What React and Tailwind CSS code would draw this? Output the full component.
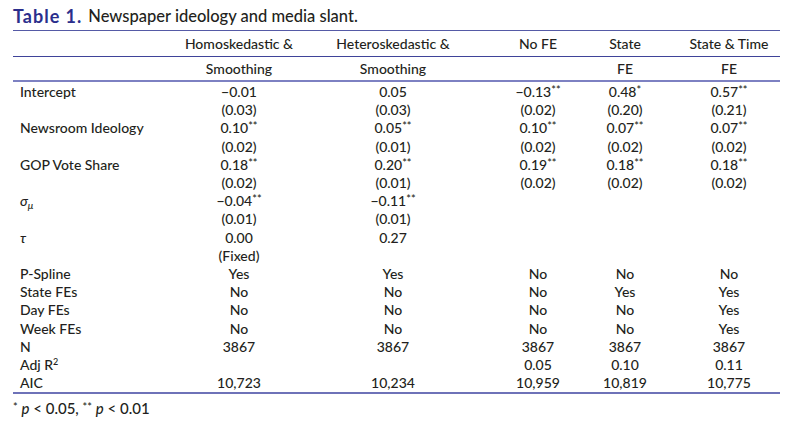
import React from "react";

const Star = ({ s }) => (
  <span className="relative -top-[3px] text-[11px] leading-none">{s}</span>
);

const V = ({ v, s }) => (
  <span className="whitespace-nowrap">
    {v}
    {s ? <Star s={s} /> : null}
  </span>
);

const rows = [
  { label: "Intercept", cells: [["−0.01"], ["0.05"], ["−0.13", "**"], ["0.48", "*"], ["0.57", "**"]] },
  { label: "", cells: [["(0.03)"], ["(0.03)"], ["(0.02)"], ["(0.20)"], ["(0.21)"]] },
  { label: "Newsroom Ideology", cells: [["0.10", "**"], ["0.05", "**"], ["0.10", "**"], ["0.07", "**"], ["0.07", "**"]] },
  { label: "", cells: [["(0.02)"], ["(0.01)"], ["(0.02)"], ["(0.02)"], ["(0.02)"]] },
  { label: "GOP Vote Share", cells: [["0.18", "**"], ["0.20", "**"], ["0.19", "**"], ["0.18", "**"], ["0.18", "**"]] },
  { label: "", cells: [["(0.02)"], ["(0.01)"], ["(0.02)"], ["(0.02)"], ["(0.02)"]] },
  {
    label: (
      <span className="italic">
        σ<span className="relative top-[3px] text-[10px]">μ</span>
      </span>
    ),
    cells: [["−0.04", "**"], ["−0.11", "**"], [""], [""], [""]],
  },
  { label: "", cells: [["(0.01)"], ["(0.01)"], [""], [""], [""]] },
  { label: <span className="italic">τ</span>, cells: [["0.00"], ["0.27"], [""], [""], [""]] },
  { label: "", cells: [["(Fixed)"], [""], [""], [""], [""]] },
  { label: "P-Spline", cells: [["Yes"], ["Yes"], ["No"], ["No"], ["No"]] },
  { label: "State FEs", cells: [["No"], ["No"], ["No"], ["Yes"], ["Yes"]] },
  { label: "Day FEs", cells: [["No"], ["No"], ["No"], ["No"], ["Yes"]] },
  { label: "Week FEs", cells: [["No"], ["No"], ["No"], ["No"], ["Yes"]] },
  { label: "N", cells: [["3867"], ["3867"], ["3867"], ["3867"], ["3867"]] },
  {
    label: (
      <span>
        Adj R<span className="relative -top-[5px] text-[9px]">2</span>
      </span>
    ),
    cells: [[""], [""], ["0.05"], ["0.10"], ["0.11"]],
  },
  { label: "AIC", cells: [["10,723"], ["10,234"], ["10,959"], ["10,819"], ["10,775"]] },
];

const GRID = "grid grid-cols-[149px_154px_154px_136px_38px_34px_102px]";

const Cell = ({ children }) => (
  <div className="flex justify-center items-center">{children}</div>
);

export default function App() {
  return (
    <div
      className="w-[796px] h-[421px] bg-white text-[#231f20] overflow-hidden font-medium"
      style={{ fontFamily: "Lato, 'Open Sans', sans-serif" }}
    >
      <div className="pl-[13px] pt-[5px] h-[27px] flex items-center text-[16.5px] leading-[22px] whitespace-nowrap">
        <span className="font-bold text-[#2b2e8c] text-[18px] tracking-[1px] mr-[6px]">Table 1.</span>
        <span>Newspaper ideology and media slant.</span>
      </div>

      <div className="ml-[13px] w-[767px] mt-[3px] text-[14px]">
        <div className="h-px bg-[#555aa6]" />
        <div className={`${GRID} h-[25px] items-center`}>
          <div />
          <Cell>Homoskedastic &amp;</Cell>
          <Cell>Heteroskedastic &amp;</Cell>
          <Cell>No FE</Cell>
          <Cell>State</Cell>
          <div />
          <Cell>State &amp; Time</Cell>
        </div>
        <div className="h-px bg-[#3f4399]" />
        <div className={`${GRID} h-[23px] items-center`}>
          <div />
          <Cell>Smoothing</Cell>
          <Cell>Smoothing</Cell>
          <Cell />
          <Cell>FE</Cell>
          <div />
          <Cell>FE</Cell>
        </div>
        <div className="h-[2px] bg-[#7d81c2]" />
        <div className="pt-[1px]">
          {rows.map((r, i) => (
            <div key={i} className={`${GRID} h-[18.2px] items-center leading-none`}>
              <div className="pl-[7px] whitespace-nowrap">{r.label}</div>
              {r.cells.slice(0, 4).map((c, j) => (
                <Cell key={j}>
                  <V v={c[0]} s={c[1]} />
                </Cell>
              ))}
              <div />
              <Cell>
                <V v={r.cells[4][0]} s={r.cells[4][1]} />
              </Cell>
            </div>
          ))}
        </div>
        <div className="h-[2px] bg-[#6e72b8]" />
      </div>

      <div className="pl-[13px] pt-[6px] text-[15px] leading-[16px] whitespace-nowrap">
        <Star s="*" /> <span className="italic">p</span> &lt; 0.05, <Star s="**" />{" "}
        <span className="italic">p</span> &lt; 0.01
      </div>
    </div>
  );
}
